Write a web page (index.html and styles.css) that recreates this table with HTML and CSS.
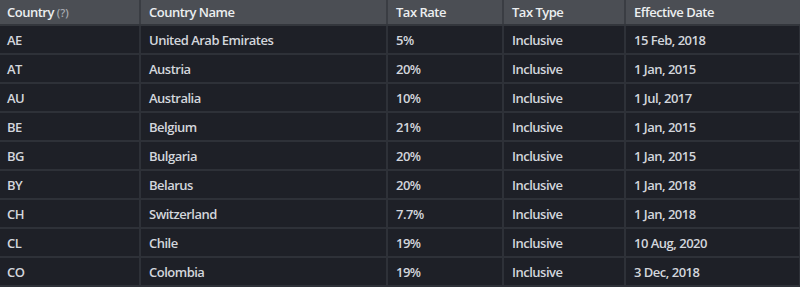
FILE: index.html
```html
<!DOCTYPE html>
<html lang="en">
<head>
<meta charset="utf-8">
<title>Tax Rates</title>
<link rel="stylesheet" href="styles.css">
</head>
<body>
<table class="tax-table">
  <colgroup>
    <col class="c-code">
    <col class="c-name">
    <col class="c-rate">
    <col class="c-type">
    <col class="c-date">
  </colgroup>
  <thead>
    <tr>
      <th>Country <span class="hint">(?)</span></th>
      <th>Country Name</th>
      <th>Tax Rate</th>
      <th>Tax Type</th>
      <th>Effective Date</th>
    </tr>
  </thead>
  <tbody>
    <tr><td>AE</td><td>United Arab Emirates</td><td>5%</td><td>Inclusive</td><td>15 Feb, 2018</td></tr>
    <tr><td>AT</td><td>Austria</td><td>20%</td><td>Inclusive</td><td>1 Jan, 2015</td></tr>
    <tr><td>AU</td><td>Australia</td><td>10%</td><td>Inclusive</td><td>1 Jul, 2017</td></tr>
    <tr><td>BE</td><td>Belgium</td><td>21%</td><td>Inclusive</td><td>1 Jan, 2015</td></tr>
    <tr><td>BG</td><td>Bulgaria</td><td>20%</td><td>Inclusive</td><td>1 Jan, 2015</td></tr>
    <tr><td>BY</td><td>Belarus</td><td>20%</td><td>Inclusive</td><td>1 Jan, 2018</td></tr>
    <tr><td>CH</td><td>Switzerland</td><td>7.7%</td><td>Inclusive</td><td>1 Jan, 2018</td></tr>
    <tr><td>CL</td><td>Chile</td><td>19%</td><td>Inclusive</td><td>10 Aug, 2020</td></tr>
    <tr><td>CO</td><td>Colombia</td><td>19%</td><td>Inclusive</td><td>3 Dec, 2018</td></tr>
  </tbody>
</table>
</body>
</html>
```
FILE: styles.css
```css
html, body {
  margin: 0;
  padding: 0;
  background: #1e2027;
}
body {
  font-family: "Open Sans", "Noto Sans", sans-serif;
  font-size: 13px;
  letter-spacing: -0.5px;
  color: #d3d6dc;
}
.tax-table {
  width: 800px;
  border-collapse: collapse;
  table-layout: fixed;
}
.c-code { width: 140px; }
.c-name { width: 247px; }
.c-rate { width: 116px; }
.c-type { width: 122px; }
.c-date { width: 175px; }
.tax-table th {
  background: #4b4e54;
  color: #eceef0;
  font-weight: 600;
  text-align: left;
  height: 24px;
  padding: 0 8px;
  border-right: 2px solid #3a3d43;
  border-bottom: 2px solid #33363c;
  line-height: 18px;
  vertical-align: middle;
}
.tax-table th:first-child { padding-left: 7px; }
.tax-table th:last-child { border-right: 1px solid #4b4e54; }
.tax-table .hint {
  font-size: 11px;
  font-weight: 600;
  letter-spacing: 0;
  color: #a7aab0;
}
.tax-table td {
  height: 27px;
  padding: 0 8px;
  font-weight: 600;
  border-right: 2px solid #2e3138;
  border-bottom: 2px solid #2e3138;
  vertical-align: middle;
  white-space: nowrap;
}
.tax-table td:first-child { padding-left: 7px; }
```
